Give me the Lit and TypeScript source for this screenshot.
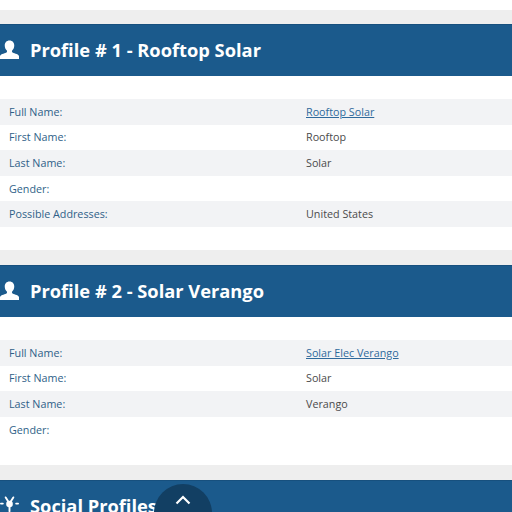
import { LitElement, css, html } from 'lit'
import { customElement } from 'lit/decorators.js'

const userIcon = html`
  <svg class="icon" viewBox="0 0 20 20">
    <path fill="#fff" d="M10 0.500c-3.200 0-5 2.300-5 5.300 0 2.200.9 4.200 2.200 5.300.3.500.3 1.300 0 1.800-1 1.100-6.300 1.500-7.200 3.900v3.200h20v-3.200c-.9-2.400-6.200-2.800-7.200-3.900-.3-.5-.3-1.300 0-1.800 1.300-1.100 2.200-3.100 2.200-5.300 0-3-1.800-5.300-5-5.300z" />
  </svg>
`

const socialIcon = html`
  <svg class="icon" viewBox="0 0 20 20">
    <g stroke="#fff" stroke-width="2" stroke-linecap="round" fill="none">
      <path d="M10 8 6 1.500M10 8l4-6.500M10 8v8" />
      <path d="M1 8h2M17 8h2" />
    </g>
    <circle cx="10" cy="8.500" r="3.500" fill="#fff" />
  </svg>
`

interface Row {
  label: string
  value?: string
  link?: boolean
}

const profiles: { title: string; rows: Row[] }[] = [
  {
    title: 'Profile # 1 - Rooftop Solar',
    rows: [
      { label: 'Full Name:', value: 'Rooftop Solar', link: true },
      { label: 'First Name:', value: 'Rooftop' },
      { label: 'Last Name:', value: 'Solar' },
      { label: 'Gender:' },
      { label: 'Possible Addresses:', value: 'United States' },
    ],
  },
  {
    title: 'Profile # 2 - Solar Verango',
    rows: [
      { label: 'Full Name:', value: 'Solar Elec Verango', link: true },
      { label: 'First Name:', value: 'Solar' },
      { label: 'Last Name:', value: 'Verango' },
      { label: 'Gender:' },
    ],
  },
]

@customElement('app-root')
export class AppRoot extends LitElement {
  private header(title: string, icon: unknown) {
    return html`
      <div class="band"></div>
      <h2 class="head">${icon}<span>${title}</span></h2>
    `
  }

  protected render() {
    return html`
      <div class="page">
        ${profiles.map(
          (p) => html`
            <section>
              ${this.header(p.title, userIcon)}
              <div class="rows">
                ${p.rows.map(
                  (r) => html`
                    <div class="row">
                      <div class="label">${r.label}</div>
                      <div class="value">
                        ${r.link ? html`<a href="#">${r.value}</a>` : r.value}
                      </div>
                    </div>
                  `,
                )}
              </div>
            </section>
          `,
        )}
        <section>${this.header('Social Profiles', socialIcon)}</section>
      </div>
      <button class="top" aria-label="Back to top">
        <svg viewBox="0 0 16 10" width="16" height="10">
          <path d="M1.500 8.500 8 2l6.500 6.500" fill="none" stroke="#fff" stroke-width="2.200" />
        </svg>
      </button>
    `
  }

  static styles = css`
    :host {
      display: block;
      position: relative;
      width: 512px;
      height: 512px;
      overflow: hidden;
      background: #fff;
      font-family: 'Open Sans', sans-serif;
    }

    .page {
      padding-top: 10px;
    }

    section {
      padding-bottom: 23px;
    }

    .band {
      height: 15px;
      background: #eeeeee;
    }

    section:first-child .band {
      height: 14px;
    }

    .head {
      display: flex;
      align-items: center;
      gap: 11px;
      height: 52px;
      margin: 0;
      padding-bottom: 2px;
      box-sizing: border-box;
      background: #1b5a8c;
      color: #fff;
      font-size: 18.300px;
      font-weight: 700;
      border-top: 1px solid #17507e;
    }

    .icon {
      width: 19px;
      height: 19px;
    }

    .rows {
      margin-top: 23px;
    }

    .row {
      display: grid;
      grid-template-columns: 306px 1fr;
      align-items: center;
      height: 25.600px;
      font-size: 10.750px;
    }

    .row:nth-child(odd) {
      background: #f2f3f5;
    }

    .label {
      padding-left: 9px;
      color: #2f5f88;
    }

    .value {
      color: #4a4a4a;
    }

    a {
      color: #2f6a9c;
    }

    .top {
      position: absolute;
      left: 154px;
      top: 484px;
      width: 58px;
      height: 58px;
      padding: 0;
      border: none;
      border-radius: 50%;
      background: #123f63;
      display: flex;
      justify-content: center;
      align-items: flex-start;
      padding-top: 11px;
    }
  `
}
